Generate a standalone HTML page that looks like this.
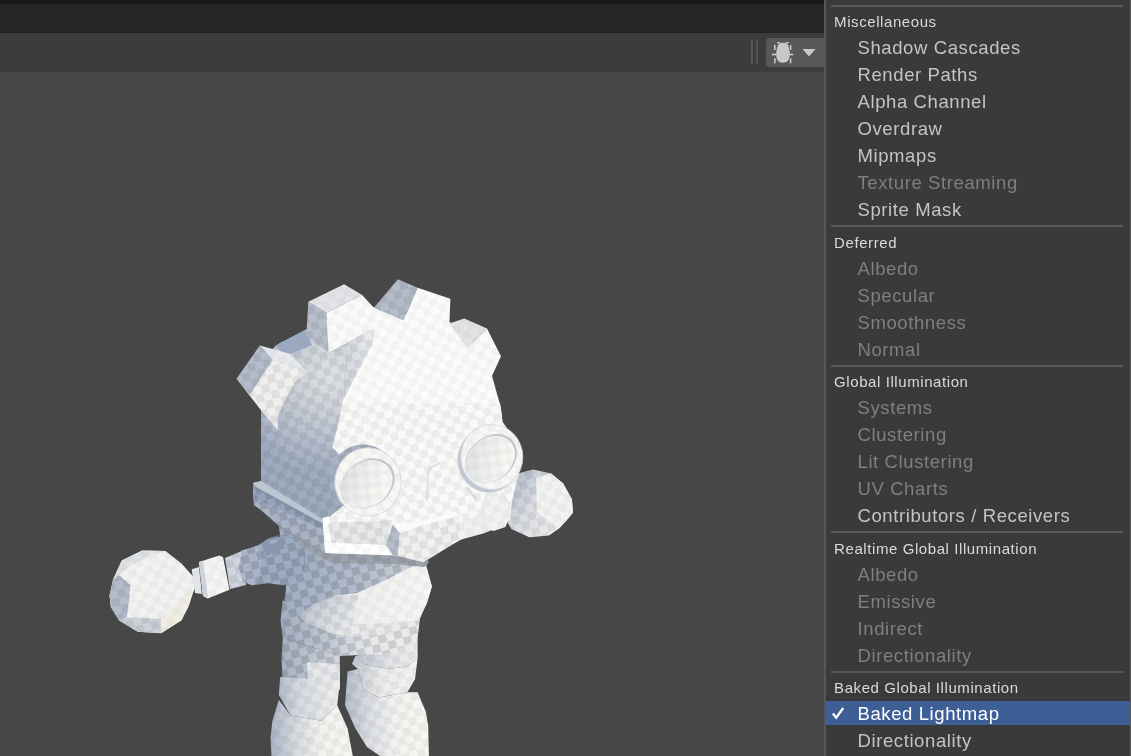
<!DOCTYPE html>
<html><head><meta charset="utf-8"><style>
html,body{margin:0;padding:0;width:1131px;height:756px;overflow:hidden;background:#474747;}
body{position:relative;font-family:"Liberation Sans",sans-serif;}
.abs{position:absolute;}
#topbar{position:absolute;left:0;top:0;width:1131px;height:4px;background:#191919;}
#tabbar{position:absolute;left:0;top:4px;width:1131px;height:28px;background:#272727;}
#tabline{position:absolute;left:0;top:32px;width:1131px;height:1px;background:#1f1f1f;}
#toolbar{position:absolute;left:0;top:33px;width:1131px;height:39px;background:#3c3c3c;}
#scene{position:absolute;left:0;top:72px;width:824px;height:684px;background:#474747;overflow:hidden;}
.vsep{position:absolute;top:40px;height:24px;width:1.5px;background:#555;}
#btn{position:absolute;left:766px;top:38px;width:60px;height:29px;background:#585858;border-radius:3px;}
#menu{position:absolute;left:824px;top:0;width:307px;height:756px;background:#3a3a3a;border-left:2px solid #575757;border-right:1px solid #5a5a5a;box-sizing:border-box;overflow:hidden;will-change:transform;}
#menu .sep{position:absolute;left:5px;width:292px;height:2px;background:#5a5a5a;}
#menu .hdr{position:absolute;left:8.1px;font-size:15px;line-height:1;color:#dadada;white-space:nowrap;letter-spacing:0.58px;}
#menu .it{position:absolute;left:31.5px;font-size:18.5px;line-height:1;color:#c4c4c4;white-space:nowrap;letter-spacing:0.6px;}
#menu .dis{color:#7f7f7f;}
#menu .sel{color:#ffffff;}
#menu .hl{position:absolute;left:0;width:304px;height:24px;background:#3e5f96;}
#menu .chk{position:absolute;left:5.5px;}
</style></head><body>
<div id="topbar"></div><div id="tabbar"></div><div id="tabline"></div><div id="toolbar"></div>
<div class="vsep" style="left:751px"></div><div class="vsep" style="left:756px"></div>
<div id="btn"></div>
<svg class="abs" style="left:771px;top:41px" width="23" height="23" viewBox="771 41 23 23">
<g fill="#c8c8c8">
<path d="M777.2,47.5 Q777.6,42.8 783,42.8 Q788.4,42.8 788.8,47.5 Q789.8,50 789.8,55 Q789.6,62.8 783,62.8 Q776.2,62.8 776.2,55 Q776.2,50 777.2,47.5 Z"/>
<rect x="777" y="42" width="3.2" height="1.4"/><rect x="785.6" y="42" width="3.2" height="1.4"/>
<rect x="774" y="45" width="1.6" height="5"/><rect x="789.8" y="45" width="1.6" height="5"/>
<rect x="771.8" y="53.6" width="4.6" height="1.8"/><rect x="789.2" y="53.6" width="4" height="1.8"/>
<rect x="774" y="58.3" width="1.6" height="5"/><rect x="789.8" y="58.3" width="1.6" height="5"/>
</g></svg>
<svg class="abs" style="left:802px;top:48px" width="14" height="10" viewBox="0 0 14 10"><path d="M0.5 1 L13.5 1 L7 8.5 Z" fill="#c8c8c8"/></svg>
<div id="scene"><svg width="824" height="756" viewBox="0 0 824 756" style="position:absolute;left:0;top:-72px"><defs><linearGradient id="gPelvis" x1="282" y1="0" x2="420" y2="0" gradientUnits="userSpaceOnUse"><stop offset="0" stop-color="#a3aec0"/><stop offset="0.35" stop-color="#c0c7d2"/><stop offset="0.6" stop-color="#e4e6e8"/><stop offset="1" stop-color="#ececea"/></linearGradient><linearGradient id="gBelly" x1="290" y1="565" x2="400" y2="610" gradientUnits="userSpaceOnUse"><stop offset="0" stop-color="#a0adc2"/><stop offset="0.6" stop-color="#b2bccb"/><stop offset="1" stop-color="#cdd2da"/></linearGradient><linearGradient id="gBellyLit" x1="312" y1="0" x2="432" y2="0" gradientUnits="userSpaceOnUse"><stop offset="0" stop-color="#d4d8de"/><stop offset="0.25" stop-color="#eeeeee"/><stop offset="1" stop-color="#f6f6f4"/></linearGradient><linearGradient id="gBellyFacet" x1="305" y1="600" x2="355" y2="630" gradientUnits="userSpaceOnUse"><stop offset="0" stop-color="#bcc3ce"/><stop offset="0.5" stop-color="#d6dae0"/><stop offset="1" stop-color="#eceded"/></linearGradient><linearGradient id="gThighL" x1="280" y1="0" x2="340" y2="0" gradientUnits="userSpaceOnUse"><stop offset="0" stop-color="#a4b0c2"/><stop offset="0.55" stop-color="#bcc4d0"/><stop offset="1" stop-color="#d0d4dc"/></linearGradient><linearGradient id="gKneeL" x1="278" y1="0" x2="340" y2="0" gradientUnits="userSpaceOnUse"><stop offset="0" stop-color="#b0b9c9"/><stop offset="0.35" stop-color="#d6dae0"/><stop offset="1" stop-color="#f0f0ec"/></linearGradient><linearGradient id="gBootL" x1="270" y1="0" x2="355" y2="0" gradientUnits="userSpaceOnUse"><stop offset="0" stop-color="#aab4c6"/><stop offset="0.3" stop-color="#d6dae0"/><stop offset="0.6" stop-color="#f2f2ef"/><stop offset="1" stop-color="#f6f6f2"/></linearGradient><linearGradient id="gThighR" x1="355" y1="0" x2="420" y2="0" gradientUnits="userSpaceOnUse"><stop offset="0" stop-color="#bac2ce"/><stop offset="0.5" stop-color="#e0e2e5"/><stop offset="1" stop-color="#eeeeec"/></linearGradient><linearGradient id="gKneeR" x1="360" y1="0" x2="416" y2="0" gradientUnits="userSpaceOnUse"><stop offset="0" stop-color="#ccd1d9"/><stop offset="0.4" stop-color="#ececea"/><stop offset="1" stop-color="#f4f4f2"/></linearGradient><linearGradient id="gBootR" x1="345" y1="0" x2="429" y2="0" gradientUnits="userSpaceOnUse"><stop offset="0" stop-color="#b4bcca"/><stop offset="0.3" stop-color="#dcdfe3"/><stop offset="0.6" stop-color="#f2f2ef"/><stop offset="1" stop-color="#f6f6f2"/></linearGradient><radialGradient id="gHeadL" cx="332" cy="375" r="100" gradientUnits="userSpaceOnUse"><stop offset="0" stop-color="#e0e2e5"/><stop offset="0.35" stop-color="#ccd1d8"/><stop offset="0.7" stop-color="#b3bccb"/><stop offset="1" stop-color="#9eaabe"/></radialGradient><linearGradient id="gHeadMid" x1="325" y1="0" x2="378" y2="0" gradientUnits="userSpaceOnUse"><stop offset="0" stop-color="#bfc6d1"/><stop offset="0.6" stop-color="#dcdfe3"/><stop offset="1" stop-color="#f0f0ee"/></linearGradient><linearGradient id="gBallR" x1="502" y1="480" x2="570" y2="525" gradientUnits="userSpaceOnUse"><stop offset="0" stop-color="#aab4c4"/><stop offset="0.45" stop-color="#d8dbe0"/><stop offset="1" stop-color="#f2f2f0"/></linearGradient><linearGradient id="gInner" x1="350" y1="462" x2="385" y2="505" gradientUnits="userSpaceOnUse"><stop offset="0" stop-color="#dfe1e5"/><stop offset="0.45" stop-color="#efefee"/><stop offset="1" stop-color="#fafaf6"/></linearGradient><linearGradient id="gInnerR" x1="474" y1="440" x2="508" y2="480" gradientUnits="userSpaceOnUse"><stop offset="0" stop-color="#dfe1e5"/><stop offset="0.45" stop-color="#efefee"/><stop offset="1" stop-color="#fafaf6"/></linearGradient><pattern id="chk" width="16" height="16" patternUnits="userSpaceOnUse" patternTransform="rotate(-15)"><rect x="0" y="0" width="8" height="8" fill="#000"/><rect x="8" y="8" width="8" height="8" fill="#000"/></pattern></defs><polygon points="109.5,595.5 113.1,579.5 121.8,560.6 142.2,550.4 165.5,551.1 181.5,563.5 193.1,576.6 194.6,588.2 188.8,605.7 181.5,620.2 161.1,633.3 137.8,631.8 118.9,620.2 110.9,607.1" fill="#f2f2f0" /><polygon points="109.5,595.5 113.1,579.5 121.8,560.6 142.2,550.4 165.5,551.1 181.5,563.5 193.1,576.6 194.6,588.2 188.8,605.7 181.5,620.2 161.1,633.3 137.8,631.8 118.9,620.2 110.9,607.1" fill="url(#chk)" fill-opacity="0.03"/><polygon points="109.5,595.5 113.1,579.5 118.9,575.0 130.6,585.3 126.9,617.3 118.9,620.2 110.9,607.1" fill="#b4bcca" /><polygon points="109.5,595.5 113.1,579.5 118.9,575.0 130.6,585.3 126.9,617.3 118.9,620.2 110.9,607.1" fill="url(#chk)" fill-opacity="0.07"/><polygon points="126.9,617.3 161.1,618.8 161.1,633.3 137.8,631.8 118.9,620.2" fill="#cdd1d8" /><polygon points="126.9,617.3 161.1,618.8 161.1,633.3 137.8,631.8 118.9,620.2" fill="url(#chk)" fill-opacity="0.07"/><polygon points="113.1,579.5 121.8,560.6 142.2,550.4 165.5,551.1 150.0,556.0 130.0,566.0 118.9,575.0" fill="#dfe2e6" /><polygon points="113.1,579.5 121.8,560.6 142.2,550.4 165.5,551.1 150.0,556.0 130.0,566.0 118.9,575.0" fill="url(#chk)" fill-opacity="0.03"/><polygon points="161.1,618.8 193.1,588.2 188.8,605.7 181.5,620.2 161.1,633.3" fill="#efede4" /><polygon points="161.1,618.8 193.1,588.2 188.8,605.7 181.5,620.2 161.1,633.3" fill="url(#chk)" fill-opacity="0.03"/><polygon points="191.7,569.3 199.0,567.0 201.9,594.0 195.0,593.0" fill="#e2e4e8" /><polygon points="198.9,562.0 219.3,555.5 223.0,557.0 229.5,589.7 207.7,598.4 203.0,596.0" fill="#f4f4f2" /><polygon points="198.9,562.0 219.3,555.5 223.0,557.0 229.5,589.7 207.7,598.4 203.0,596.0" fill="url(#chk)" fill-opacity="0.03"/><polygon points="198.9,562.0 203.0,561.0 208.0,597.0 203.0,596.0" fill="#cdd2da" /><polygon points="225.0,558.0 242.0,551.0 246.0,585.0 230.0,589.0" fill="#cfd5de" /><polygon points="225.0,558.0 242.0,551.0 246.0,585.0 230.0,589.0" fill="url(#chk)" fill-opacity="0.07"/><polygon points="501.5,487.3 517.4,473.4 533.3,469.4 551.1,473.4 563.0,483.3 571.9,499.2 573.0,512.7 566.0,521.0 559.0,528.5 549.0,535.5 529.3,537.2 511.4,529.0 505.5,519.0 501.5,505.2" fill="url(#gBallR)" /><polygon points="501.5,487.3 517.4,473.4 533.3,469.4 551.1,473.4 563.0,483.3 571.9,499.2 573.0,512.7 566.0,521.0 559.0,528.5 549.0,535.5 529.3,537.2 511.4,529.0 505.5,519.0 501.5,505.2" fill="url(#chk)" fill-opacity="0.07"/><polygon points="536.0,478.0 551.1,473.4 563.0,483.3 571.9,499.2 573.0,512.7 566.0,521.0 559.0,528.5 537.0,512.0" fill="#f2f2f0" /><polygon points="536.0,478.0 551.1,473.4 563.0,483.3 571.9,499.2 573.0,512.7 566.0,521.0 559.0,528.5 537.0,512.0" fill="url(#chk)" fill-opacity="0.03"/><polygon points="282.8,637.8 339.8,656.0 339.8,689.7 307.4,689.7 282.8,681.9 281.5,660.0" fill="url(#gThighL)" /><polygon points="282.8,637.8 339.8,656.0 339.8,689.7 307.4,689.7 282.8,681.9 281.5,660.0" fill="url(#chk)" fill-opacity="0.12"/><polygon points="307.4,662.0 339.8,664.0 339.8,689.7 307.4,689.7" fill="#e6e8ec" /><polygon points="307.4,662.0 339.8,664.0 339.8,689.7 307.4,689.7" fill="url(#chk)" fill-opacity="0.07"/><polygon points="280.2,676.7 339.8,681.9 337.2,705.3 321.7,720.8 290.5,715.6 278.9,694.9" fill="url(#gKneeL)" /><polygon points="280.2,676.7 339.8,681.9 337.2,705.3 321.7,720.8 290.5,715.6 278.9,694.9" fill="url(#chk)" fill-opacity="0.05"/><polygon points="272.4,720.8 278.9,700.0 290.5,715.6 321.7,720.8 337.2,705.3 347.6,728.6 352.8,756.0 271.5,756.0 270.5,738.0" fill="url(#gBootL)" /><polygon points="272.4,720.8 278.9,700.0 290.5,715.6 321.7,720.8 337.2,705.3 347.6,728.6 352.8,756.0 271.5,756.0 270.5,738.0" fill="url(#chk)" fill-opacity="0.05"/><polygon points="355.4,656.0 417.6,637.8 417.6,658.6 407.3,666.4 386.5,669.0 363.2,663.8" fill="url(#gThighR)" /><polygon points="355.4,656.0 417.6,637.8 417.6,658.6 407.3,666.4 386.5,669.0 363.2,663.8" fill="url(#chk)" fill-opacity="0.05"/><polygon points="347.6,671.5 358.0,669.0 363.2,689.7 378.7,697.5 407.3,692.3 417.6,692.3 425.9,712.1 428.2,725.9 428.9,756.0 380.0,756.0 367.0,747.0 355.4,728.6 345.0,705.3" fill="url(#gBootR)" /><polygon points="347.6,671.5 358.0,669.0 363.2,689.7 378.7,697.5 407.3,692.3 417.6,692.3 425.9,712.1 428.2,725.9 428.9,756.0 380.0,756.0 367.0,747.0 355.4,728.6 345.0,705.3" fill="url(#chk)" fill-opacity="0.05"/><polygon points="355.4,656.0 363.2,663.8 386.5,669.0 407.3,666.4 417.6,658.6 415.0,679.3 407.3,692.3 378.7,697.5 363.2,689.7 358.0,669.0 352.0,664.0" fill="url(#gKneeR)" /><polygon points="355.4,656.0 363.2,663.8 386.5,669.0 407.3,666.4 417.6,658.6 415.0,679.3 407.3,692.3 378.7,697.5 363.2,689.7 358.0,669.0 352.0,664.0" fill="url(#chk)" fill-opacity="0.05"/><polygon points="282.8,600.0 288.0,606.7 313.9,624.9 347.6,635.2 391.7,630.0 420.2,617.1 417.6,637.8 391.7,653.4 339.8,656.0 282.8,637.8 280.5,620.0" fill="url(#gPelvis)" /><polygon points="282.8,600.0 288.0,606.7 313.9,624.9 347.6,635.2 391.7,630.0 420.2,617.1 417.6,637.8 391.7,653.4 339.8,656.0 282.8,637.8 280.5,620.0" fill="url(#chk)" fill-opacity="0.12"/><polygon points="278.7,525.7 298.5,539.0 325.0,552.2 330.0,556.0 423.7,556.0 427.1,569.0 431.9,586.5 427.1,602.4 419.2,619.8 392.2,632.5 355.7,636.5 333.5,634.1 306.5,623.0 290.6,610.3 284.3,602.4 285.9,589.7 286.0,575.0" fill="url(#gBelly)" /><polygon points="278.7,525.7 298.5,539.0 325.0,552.2 330.0,556.0 423.7,556.0 427.1,569.0 431.9,586.5 427.1,602.4 419.2,619.8 392.2,632.5 355.7,636.5 333.5,634.1 306.5,623.0 290.6,610.3 284.3,602.4 285.9,589.7 286.0,575.0" fill="url(#chk)" fill-opacity="0.12"/><polygon points="309.7,607.1 333.5,596.0 357.3,592.9 389.0,578.6 412.9,565.9 424.0,562.7 427.1,569.0 431.9,586.5 427.1,602.4 419.2,619.8 392.2,632.5 355.7,636.5 333.5,634.1 306.5,623.0 300.0,616.0" fill="url(#gBellyLit)" /><polygon points="309.7,607.1 333.5,596.0 357.3,592.9 389.0,578.6 412.9,565.9 424.0,562.7 427.1,569.0 431.9,586.5 427.1,602.4 419.2,619.8 392.2,632.5 355.7,636.5 333.5,634.1 306.5,623.0 300.0,616.0" fill="url(#chk)" fill-opacity="0.03"/><polygon points="309.7,607.1 333.5,596.0 358.0,595.0 352.5,624.6 355.7,636.5 333.5,634.1 306.5,623.0 300.0,616.0" fill="url(#gBellyFacet)" /><polygon points="309.7,607.1 333.5,596.0 358.0,595.0 352.5,624.6 355.7,636.5 333.5,634.1 306.5,623.0 300.0,616.0" fill="url(#chk)" fill-opacity="0.07"/><polygon points="352.5,624.6 392.2,623.0 419.2,619.8 392.2,632.5 355.7,636.5" fill="#e8e9ea" /><polygon points="352.5,624.6 392.2,623.0 419.2,619.8 392.2,632.5 355.7,636.5" fill="url(#chk)" fill-opacity="0.07"/><polygon points="241.9,550.6 257.8,545.6 269.7,537.7 281.6,536.7 295.5,541.7 303.4,551.6 304.4,567.5 295.5,581.3 283.6,585.3 267.7,583.3 251.8,585.3 242.9,581.3 238.9,567.5" fill="#9eabc1" /><polygon points="241.9,550.6 257.8,545.6 269.7,537.7 281.6,536.7 295.5,541.7 303.4,551.6 304.4,567.5 295.5,581.3 283.6,585.3 267.7,583.3 251.8,585.3 242.9,581.3 238.9,567.5" fill="url(#chk)" fill-opacity="0.12"/><polygon points="241.9,550.6 257.8,545.6 262.0,560.0 258.0,583.0 251.8,585.3 242.9,581.3 238.9,567.5" fill="#aab5c8" /><polygon points="241.9,550.6 257.8,545.6 262.0,560.0 258.0,583.0 251.8,585.3 242.9,581.3 238.9,567.5" fill="url(#chk)" fill-opacity="0.12"/><polygon points="263.0,547.0 281.0,541.0 285.0,548.0 266.0,556.0" fill="#8896ae" /><path d="M262,545 Q272,534 286,536 Q300,540 304,552 Q306,562 303,572" stroke="#7d8ca6" stroke-width="1" fill="none" opacity="0.8"/><polygon points="261.0,400.0 262.0,360.0 280.0,343.0 308.0,330.0 330.0,318.0 373.0,307.0 450.0,322.0 492.0,376.0 501.0,408.0 502.5,422.0 515.0,440.0 522.0,460.0 512.0,500.0 510.0,520.0 485.0,528.0 460.0,540.0 424.0,560.0 392.9,556.0 325.0,554.0 300.0,535.0 254.0,505.0 253.0,483.0 261.0,481.0" fill="#fbfbf9" /><polygon points="261.0,400.0 262.0,360.0 280.0,343.0 308.0,330.0 330.0,318.0 373.0,307.0 450.0,322.0 492.0,376.0 501.0,408.0 502.5,422.0 515.0,440.0 522.0,460.0 512.0,500.0 510.0,520.0 485.0,528.0 460.0,540.0 424.0,560.0 392.9,556.0 325.0,554.0 300.0,535.0 254.0,505.0 253.0,483.0 261.0,481.0" fill="url(#chk)" fill-opacity="0.03"/><polygon points="341.2,403.0 500.0,403.0 502.5,422.0 515.0,440.0 522.0,460.0 512.0,500.0 510.0,520.0 485.0,528.0 460.0,540.0 424.0,560.0 392.9,556.0 325.0,554.0 327.0,519.0 331.6,460.0 335.0,430.0" fill="#f9f9f7" /><polygon points="341.2,403.0 500.0,403.0 502.5,422.0 515.0,440.0 522.0,460.0 512.0,500.0 510.0,520.0 485.0,528.0 460.0,540.0 424.0,560.0 392.9,556.0 325.0,554.0 327.0,519.0 331.6,460.0 335.0,430.0" fill="url(#chk)" fill-opacity="0.05"/><polygon points="261.0,482.0 261.0,400.0 262.0,360.0 275.8,345.5 305.0,330.0 330.0,322.0 345.0,350.0 343.1,400.0 338.3,423.8 332.4,447.6 340.0,455.0 350.0,500.0 327.0,519.0 325.0,553.0 300.0,535.0 254.0,505.0 253.0,483.0" fill="url(#gHeadL)" /><polygon points="261.0,482.0 261.0,400.0 262.0,360.0 275.8,345.5 305.0,330.0 330.0,322.0 345.0,350.0 343.1,400.0 338.3,423.8 332.4,447.6 340.0,455.0 350.0,500.0 327.0,519.0 325.0,553.0 300.0,535.0 254.0,505.0 253.0,483.0" fill="url(#chk)" fill-opacity="0.07"/><polygon points="275.8,345.5 305.0,330.0 312.0,345.0 285.0,356.0" fill="#9aa8c0" /><polygon points="328.8,352.6 375.0,327.0 372.0,345.0 343.1,400.0 345.0,350.0" fill="url(#gHeadMid)" /><polygon points="328.8,352.6 375.0,327.0 372.0,345.0 343.1,400.0 345.0,350.0" fill="url(#chk)" fill-opacity="0.07"/><polygon points="236.5,378.7 259.8,345.5 272.9,359.8 249.8,394.0" fill="#b4bccb" /><polygon points="236.5,378.7 259.8,345.5 272.9,359.8 249.8,394.0" fill="url(#chk)" fill-opacity="0.07"/><polygon points="259.8,345.5 289.5,353.8 307.4,371.7 272.9,359.8" fill="#e8eaee" /><polygon points="259.8,345.5 289.5,353.8 307.4,371.7 272.9,359.8" fill="url(#chk)" fill-opacity="0.03"/><polygon points="249.8,394.0 272.9,359.8 307.4,371.7 295.5,381.2 285.3,400.0 277.6,416.7 277.6,430.0 262.0,411.6 236.5,378.7" fill="#efefed" /><polygon points="249.8,394.0 272.9,359.8 307.4,371.7 295.5,381.2 285.3,400.0 277.6,416.7 277.6,430.0 262.0,411.6 236.5,378.7" fill="url(#chk)" fill-opacity="0.07"/><polygon points="308.3,301.7 326.2,312.7 328.8,352.6 306.3,336.0" fill="#b7bfcc" /><polygon points="308.3,301.7 326.2,312.7 328.8,352.6 306.3,336.0" fill="url(#chk)" fill-opacity="0.07"/><polygon points="308.3,301.7 344.0,284.3 361.9,294.8 326.2,312.7" fill="#e2e4e8" /><polygon points="308.3,301.7 344.0,284.3 361.9,294.8 326.2,312.7" fill="url(#chk)" fill-opacity="0.03"/><polygon points="326.2,312.7 361.9,294.8 375.0,309.0 375.0,327.0 328.8,352.6" fill="#fafaf8" /><polygon points="326.2,312.7 361.9,294.8 375.0,309.0 375.0,327.0 328.8,352.6" fill="url(#chk)" fill-opacity="0.03"/><polygon points="374.0,307.7 397.8,279.3 417.6,287.8 403.7,320.6" fill="#b4bcca" /><polygon points="374.0,307.7 397.8,279.3 417.6,287.8 403.7,320.6" fill="url(#chk)" fill-opacity="0.07"/><polygon points="417.6,287.8 450.4,298.7 449.4,323.5 440.0,335.0 403.7,320.6" fill="#fbfbf9" /><polygon points="417.6,287.8 450.4,298.7 449.4,323.5 440.0,335.0 403.7,320.6" fill="url(#chk)" fill-opacity="0.03"/><polygon points="449.4,323.5 464.2,318.6 487.0,328.5 467.2,348.3" fill="#e4e4e4" /><polygon points="449.4,323.5 464.2,318.6 487.0,328.5 467.2,348.3" fill="url(#chk)" fill-opacity="0.03"/><polygon points="467.2,348.3 487.0,328.5 501.0,356.3 492.0,376.1 475.0,380.0 450.0,340.0" fill="#fafaf8" /><polygon points="467.2,348.3 487.0,328.5 501.0,356.3 492.0,376.1 475.0,380.0 450.0,340.0" fill="url(#chk)" fill-opacity="0.03"/><polygon points="252.9,483.3 261.8,481.3 325.3,521.0 326.0,531.0 253.5,497.9" fill="#94a3bc" /><polygon points="252.9,483.3 261.8,481.3 325.3,521.0 326.0,531.0 253.5,497.9" fill="url(#chk)" fill-opacity="0.12"/><polygon points="252.9,483.3 261.8,481.3 325.3,521.0 325.5,525.0 256.0,487.0" fill="#bcc5d3" /><polygon points="253.5,497.9 326.0,531.0 325.0,553.0 298.5,539.0 278.7,525.7 256.2,505.9" fill="#aab3c4" /><polygon points="253.5,497.9 326.0,531.0 325.0,553.0 298.5,539.0 278.7,525.7 256.2,505.9" fill="url(#chk)" fill-opacity="0.12"/><polygon points="300.0,537.0 325.0,553.0 392.9,555.5 424.0,559.5 429.0,561.0 427.0,565.0 424.0,567.0 392.9,564.0 331.0,563.0 300.0,547.0" fill="#9ca2ac" /><polygon points="300.0,537.0 325.0,553.0 392.9,555.5 424.0,559.5 429.0,561.0 427.0,565.0 424.0,567.0 392.9,564.0 331.0,563.0 300.0,547.0" fill="url(#chk)" fill-opacity="0.07"/><polygon points="322.5,518.0 329.0,516.0 331.5,542.4 385.7,544.8 392.9,554.9 325.0,553.1" fill="#ffffff" /><polygon points="322.5,518.0 329.0,516.0 331.5,542.4 385.7,544.8 392.9,554.9 325.0,553.1" fill="url(#chk)" fill-opacity="0.03"/><polygon points="328.0,523.3 392.0,520.0 385.7,544.8 331.5,542.4" fill="#e6e8ea" /><polygon points="328.0,523.3 392.0,520.0 385.7,544.8 331.5,542.4" fill="url(#chk)" fill-opacity="0.07"/><path d="M440,463.5 Q429,466 428,474 L427,501" stroke="#cfd2d8" stroke-width="2" fill="none" opacity="0.6"/><path d="M466,487 Q472,493 477,500" stroke="#c4cad4" stroke-width="2.5" fill="none" opacity="0.5"/><polygon points="385.7,544.8 392.9,524.5 400.0,532.9 398.0,556.0 392.9,554.9" fill="#b5bdcb" /><polygon points="385.7,544.8 392.9,524.5 400.0,532.9 398.0,556.0 392.9,554.9" fill="url(#chk)" fill-opacity="0.07"/><polygon points="392.9,524.5 420.0,521.0 455.4,511.7 459.4,515.7 460.4,539.5 423.7,562.3 398.0,556.0 400.0,532.9" fill="#f0f0ee" /><polygon points="392.9,524.5 420.0,521.0 455.4,511.7 459.4,515.7 460.4,539.5 423.7,562.3 398.0,556.0 400.0,532.9" fill="url(#chk)" fill-opacity="0.07"/><polygon points="392.9,524.5 420.0,521.0 455.4,511.7 459.4,515.7 420.0,526.0 400.0,532.9" fill="#fafafa" /><polygon points="460.4,522.7 483.2,511.7 499.0,499.8 509.0,503.8 510.0,519.7 499.0,527.6 483.2,533.6 461.4,539.5" fill="#f0f0ee" /><polygon points="460.4,522.7 483.2,511.7 499.0,499.8 509.0,503.8 510.0,519.7 499.0,527.6 483.2,533.6 461.4,539.5" fill="url(#chk)" fill-opacity="0.03"/><polygon points="485.0,486.0 500.0,488.0 510.0,504.0 499.0,500.0" fill="#e0e2e6" /><polygon points="487.6,488.3 499.5,486.3 505.5,503.2 509.4,517.1 505.5,527.0 493.6,531.0 483.7,527.0 479.7,511.1" fill="#f2f2f0" /><polygon points="487.6,488.3 499.5,486.3 505.5,503.2 509.4,517.1 505.5,527.0 493.6,531.0 483.7,527.0 479.7,511.1" fill="url(#chk)" fill-opacity="0.03"/><polygon points="479.7,511.1 487.6,488.3 490.0,489.0 484.0,512.0 487.0,529.0 483.7,527.0" fill="#e6e9ed" /><ellipse cx="363" cy="478.5" rx="33.2" ry="34.2" transform="rotate(0 363 478.5)" fill="#aab3c3" /><ellipse cx="363" cy="478.5" rx="33.2" ry="34.2" transform="rotate(0 363 478.5)" fill="url(#chk)" fill-opacity="0.07"/><ellipse cx="368" cy="482" rx="33.2" ry="34.2" transform="rotate(0 368 482)" fill="#f7f7f5" stroke="#d6d8dc" stroke-width="0.8"/><ellipse cx="368" cy="482" rx="33.2" ry="34.2" transform="rotate(0 368 482)" fill="url(#chk)" fill-opacity="0.03"/><ellipse cx="367.5" cy="483.5" rx="29" ry="23" transform="rotate(-35 367.5 483.5)" fill="#c0c4cc" /><ellipse cx="366.4" cy="484.3" rx="28" ry="22.2" transform="rotate(-35 366.4 484.3)" fill="url(#gInner)" /><ellipse cx="366.4" cy="484.3" rx="28" ry="22.2" transform="rotate(-35 366.4 484.3)" fill="url(#chk)" fill-opacity="0.03"/><ellipse cx="488.5" cy="460" rx="31" ry="32.5" transform="rotate(0 488.5 460)" fill="#c2c8d2" /><ellipse cx="491.8" cy="457" rx="31" ry="32.5" transform="rotate(0 491.8 457)" fill="#f7f7f5" stroke="#d6d8dc" stroke-width="0.8"/><ellipse cx="491.8" cy="457" rx="31" ry="32.5" transform="rotate(0 491.8 457)" fill="url(#chk)" fill-opacity="0.03"/><ellipse cx="491" cy="458.5" rx="28" ry="22" transform="rotate(-38 491 458.5)" fill="#c0c4cc" /><ellipse cx="490" cy="459.3" rx="27" ry="21.2" transform="rotate(-38 490 459.3)" fill="url(#gInnerR)" /><ellipse cx="490" cy="459.3" rx="27" ry="21.2" transform="rotate(-38 490 459.3)" fill="url(#chk)" fill-opacity="0.03"/></svg></div>
<div id="menu">
<div class="sep" style="top:4.5px"></div>
<div class="hdr" style="top:14.30px">Miscellaneous</div>
<div class="it" style="top:39.34px">Shadow Cascades</div>
<div class="it" style="top:66.34px">Render Paths</div>
<div class="it" style="top:93.34px">Alpha Channel</div>
<div class="it" style="top:120.34px">Overdraw</div>
<div class="it" style="top:147.34px">Mipmaps</div>
<div class="it dis" style="top:174.34px">Texture Streaming</div>
<div class="it" style="top:201.34px">Sprite Mask</div>
<div class="sep" style="top:225.0px"></div>
<div class="hdr" style="top:234.80px">Deferred</div>
<div class="it dis" style="top:259.84px">Albedo</div>
<div class="it dis" style="top:286.84px">Specular</div>
<div class="it dis" style="top:313.84px">Smoothness</div>
<div class="it dis" style="top:340.84px">Normal</div>
<div class="sep" style="top:364.5px"></div>
<div class="hdr" style="top:374.30px">Global Illumination</div>
<div class="it dis" style="top:399.34px">Systems</div>
<div class="it dis" style="top:426.34px">Clustering</div>
<div class="it dis" style="top:453.34px">Lit Clustering</div>
<div class="it dis" style="top:480.34px">UV Charts</div>
<div class="it" style="top:507.34px">Contributors / Receivers</div>
<div class="sep" style="top:531.0px"></div>
<div class="hdr" style="top:540.80px">Realtime Global Illumination</div>
<div class="it dis" style="top:565.84px">Albedo</div>
<div class="it dis" style="top:592.84px">Emissive</div>
<div class="it dis" style="top:619.84px">Indirect</div>
<div class="it dis" style="top:646.84px">Directionality</div>
<div class="sep" style="top:670.5px"></div>
<div class="hdr" style="top:680.30px">Baked Global Illumination</div>
<div class="hl" style="top:701.0px"></div>
<svg class="chk" style="top:707.0px" width="14" height="13" viewBox="0 0 14 13"><path d="M0.8 6.5 L4.2 10.6 L11.2 1" stroke="#fff" stroke-width="2.3" fill="none"/></svg>
<div class="it sel" style="top:705.34px">Baked Lightmap</div>
<div class="it" style="top:732.34px">Directionality</div>
</div>
</body></html>
